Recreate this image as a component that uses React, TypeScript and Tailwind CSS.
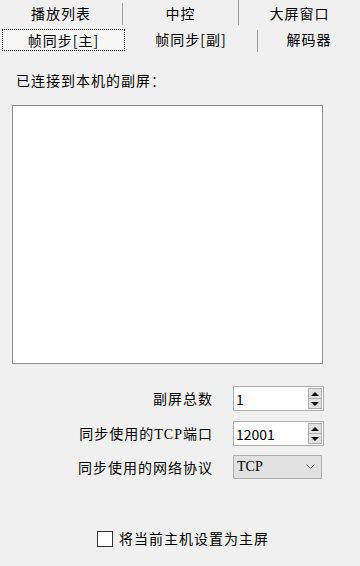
import React from "react";

const font = { fontFamily: '"Noto Sans CJK SC", "Noto Sans", sans-serif' };

function SpinBox({ value }: { value: string }) {
  return (
    <div className="flex h-[25px] w-[91px] items-stretch border border-[#adadad] bg-white">
      <div className="flex flex-1 items-center pl-[2px] text-[14px] leading-none text-black">{value}</div>
      <div className="my-[1px] mr-[1px] flex w-[14px] flex-col">
        <div className="flex flex-1 items-center justify-center border border-[#adadad] bg-[#e1e1e1]">
          <div className="h-0 w-0 border-x-[4px] border-b-[4px] border-x-transparent border-b-black" />
        </div>
        <div className="flex flex-1 items-center justify-center border border-t-0 border-[#adadad] bg-[#e1e1e1]">
          <div className="h-0 w-0 border-x-[4px] border-t-[4px] border-x-transparent border-t-black" />
        </div>
      </div>
    </div>
  );
}

function Combo({ value }: { value: string }) {
  return (
    <div className="flex h-[24px] w-[89px] items-center justify-between border border-[#adadad] bg-[#e1e1e1] pl-[3px] pr-[6px]">
      <span className="text-[14px] leading-none text-black" style={{ fontFamily: '"Liberation Serif", "Noto Sans CJK SC", serif' }}>
        {value}
      </span>
      <svg width="9" height="6" viewBox="0 0 9 6">
        <path d="M0.5 0.5 L4.5 4.5 L8.5 0.5" fill="none" stroke="#555" strokeWidth="1" />
      </svg>
    </div>
  );
}

export default function App() {
  return (
    <div className="flex h-[566px] w-[360px] flex-col bg-[#f0f0f0] text-[14px] text-black" style={font}>
      {/* tab rows */}
      <div className="flex h-[27px]">
        <div className="flex w-[122px] items-center justify-center pb-[1px] tracking-[1px]">播放列表</div>
        <div className="mt-[3px] mb-[2px] w-px bg-[#a0a0a0]" />
        <div className="flex w-[115px] items-center justify-center pb-[1px] tracking-[1px]">中控</div>
        <div className="mb-[2px] w-px bg-[#a0a0a0]" />
        <div className="flex flex-1 items-center justify-center pb-[1px] tracking-[1px]">大屏窗口</div>
      </div>
      <div className="flex h-[25px]">
        <div className="ml-[2px] mt-[2px] flex h-[22px] w-[123px] items-center justify-center border border-dotted border-black bg-[#f7f7f7] tracking-[1px]">
          帧同步[主]
        </div>
        <div className="flex w-[132px] items-center justify-center tracking-[1px]">帧同步[副]</div>
        <div className="mt-[3px] w-px bg-[#a0a0a0]" />
        <div className="flex flex-1 items-center justify-center tracking-[1px]">解码器</div>
      </div>

      <div className="mt-[20px] pl-[16px] leading-[16px] tracking-[1px]">已连接到本机的副屏：</div>

      <div className="ml-[12px] mt-[17px] h-[259px] w-[311px] border border-[#8a8d93] bg-white" />

      <div className="mt-[22px] grid grid-cols-[233px_auto] items-center gap-y-[10px]">
        <div className="pr-[20px] text-right tracking-[1px]">副屏总数</div>
        <SpinBox value="1" />
        <div className="pr-[20px] text-right tracking-[1px]">
          同步使用的<span style={{ fontFamily: '"Liberation Serif", serif' }}>TCP</span>端口
        </div>
        <SpinBox value="12001" />
        <div className="pr-[20px] text-right tracking-[1px]">同步使用的网络协议</div>
        <div className="-mt-[1px]">
          <Combo value="TCP" />
        </div>
      </div>

      <div className="mt-[49px] flex items-center justify-center gap-[6px] pl-[6px]">
        <div className="h-[16px] w-[16px] border border-[#333] bg-white" />
        <span className="tracking-[1px]">将当前主机设置为主屏</span>
      </div>
    </div>
  );
}
